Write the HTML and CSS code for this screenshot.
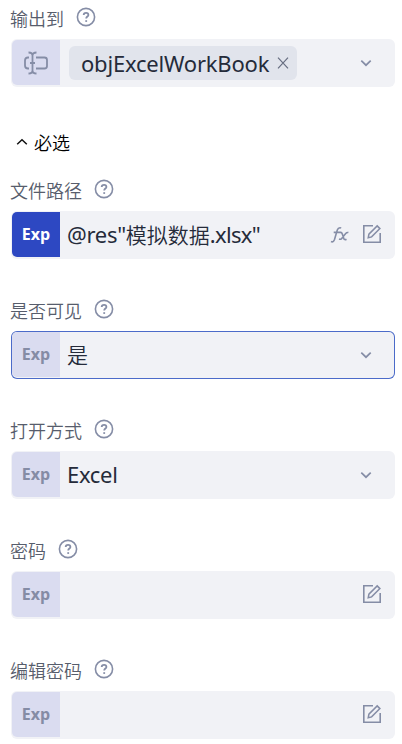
FILE: index.html
```html
<!DOCTYPE html>
<html lang="zh-CN">
<head>
<meta charset="utf-8">
<title>属性</title>
<link rel="stylesheet" href="styles.css">
</head>
<body>
<svg width="0" height="0" class="defs">
  <symbol id="help" viewBox="0 0 20 20"><circle cx="10" cy="10" r="8.6" stroke-width="1.6"/><path d="M7.7 8.1C7.7 6.7 8.7 5.9 10.1 5.9s2.3.8 2.3 2c0 1.6-2.2 1.7-2.2 3.5" stroke-width="1.8"/><path d="M10.2 13.2v1.7" stroke-width="1.8"/></symbol>
  <symbol id="down" viewBox="0 0 12 8"><path d="M1.3 1.7 6 6.2l4.7-4.5" stroke-width="1.7"/></symbol>
  <symbol id="edit" viewBox="0 0 20 20"><path d="M11 1.8H1.8v16.4h16.4V9" stroke-width="1.6"/><path d="m6.2 13.8.7-3.7 8.3-8.2 2.7 2.7-8.3 8.3z" stroke-width="1.5"/></symbol>
</svg>
<main class="panel">
  <section class="group">
    <div class="label"><span>输出到</span><svg class="help"><use href="#help"/></svg></div>
    <div class="field">
      <div class="mode"><svg class="var" viewBox="0 0 24 24"><path d="M5 6.5H4Q1 6.5 1 9.5v5q0 3 3 3h1M12 6.5h8.5q2.5 0 2.5 2.5v6q0 2.5-2.5 2.5H12M8.5 3.5v17M4.5 1.5q4 0 4 3 0-3 4-3M4.5 22.5q4 0 4-3 0 3 4 3M6 12h5" stroke-width="1.8"/></svg></div>
      <div class="tag"><span class="tag-text">objExcelWorkBook</span><svg class="close" viewBox="0 0 12 12"><path d="m1 .7 10 10.6M11 .7 1 11.3" stroke-width="1.2"/></svg></div>
      <svg class="down"><use href="#down"/></svg>
    </div>
  </section>
  <div class="section-title"><svg class="up" viewBox="0 0 12 8"><path d="M1.2 6.2 6 1.7l4.8 4.5" stroke-width="1.5"/></svg><span>必选</span></div>
  <section class="group">
    <div class="label"><span>文件路径</span><svg class="help"><use href="#help"/></svg></div>
    <div class="field">
      <div class="mode active">Exp</div>
      <div class="value path">@res"<span class="cjk">模拟数据</span><span class="ext">.xlsx"</span></div>
      <svg class="fx" viewBox="0 0 20 18"><path d="M1 15.5q2.4 1.2 3.5-2L7.3 4.1Q8.3 1 11.2 1.9M3.7 6.4h6.6M10 6.5q1.7-.5 2.3 1.4l1.5 4.5q.7 2 2.7.8M18.4 6.6q-1.5-.5-2.7 1l-4 4.8q-1.1 1.3-2.7.7" stroke-width="1.6"/></svg>
      <svg class="edit"><use href="#edit"/></svg>
    </div>
  </section>
  <section class="group">
    <div class="label"><span>是否可见</span><svg class="help"><use href="#help"/></svg></div>
    <div class="field focus">
      <div class="mode">Exp</div><div class="value"><span class="cjk">是</span></div>
      <svg class="down"><use href="#down"/></svg>
    </div>
  </section>
  <section class="group">
    <div class="label"><span>打开方式</span><svg class="help"><use href="#help"/></svg></div>
    <div class="field">
      <div class="mode">Exp</div><div class="value">Excel</div>
      <svg class="down"><use href="#down"/></svg>
    </div>
  </section>
  <section class="group">
    <div class="label"><span>密码</span><svg class="help"><use href="#help"/></svg></div>
    <div class="field"><div class="mode">Exp</div><svg class="edit"><use href="#edit"/></svg></div>
  </section>
  <section class="group">
    <div class="label"><span>编辑密码</span><svg class="help"><use href="#help"/></svg></div>
    <div class="field"><div class="mode">Exp</div><svg class="edit"><use href="#edit"/></svg></div>
  </section>
</main>
</body>
</html>
```
FILE: styles.css
```css
* { box-sizing: border-box; }
body {
  margin: 0;
  background: #fff;
  color: #252b3a;
  font-family: "Noto Sans", "Noto Sans CJK SC", sans-serif;
  overflow: hidden;
}
svg { display: block; flex: none; fill: none; stroke: #858da6; }
.defs { position: absolute; }
.panel { padding: 3px 7px 0 11px; }
.group { margin-bottom: 36px; }
.label {
  display: flex;
  align-items: center;
  gap: 11px;
  height: 28px;
  margin-bottom: 8px;
  font: 350 18px/24px "Noto Sans CJK SC", sans-serif;
  color: #575d6c;
}
.label span { margin-left: -1px; padding-top: 1px; }
.help { width: 20px; height: 20px; margin-left: 1px; }
.field {
  display: flex;
  align-items: center;
  height: 48px;
  padding: 1px;
  border-radius: 6px;
  background: #f1f2f6;
}
.field.focus { box-shadow: inset 0 0 0 1px #4b6bc9; }
.mode {
  display: flex;
  align-items: center;
  justify-content: center;
  flex: none;
  width: 48px;
  height: 45px;
  margin-top: -1px;
  padding-bottom: 2px;
  border-radius: 5px 0 0 5px;
  background: #dadcf0;
  color: #858ca5;
  font: 700 16px/22px "Open Sans", sans-serif;
}
.mode.active { background: #2d48c2; color: #fff; }
.var { width: 24px; height: 24px; margin-top: 2px; }
.value { margin: -2px 0 0 7px; font-size: 22px; line-height: 30px; letter-spacing: -.3px; white-space: nowrap; }
.cjk { font-size: 21px; font-weight: 350; letter-spacing: 0; }
.ext { letter-spacing: -.7px; }
.tag {
  display: flex;
  align-items: center;
  justify-content: space-between;
  width: 228px;
  height: 34px;
  margin: -1px 0 0 9px;
  padding: 0 8px 0 12px;
  border-radius: 6px;
  background: #e1e4ec;
}
.tag-text { font-size: 22px; line-height: 30px; letter-spacing: -.2px; white-space: nowrap; }
.close { width: 12px; height: 12px; stroke: #666d80; }
.down { width: 12px; height: 8px; margin: 0 22px 0 auto; }
.edit { width: 20px; height: 20px; margin: -2px 12px 0 auto; }
.fx { width: 20px; height: 18px; margin: 0 0 0 auto; }
.fx + .edit { margin-left: 12px; }
.section-title {
  display: flex;
  align-items: center;
  gap: 6px;
  height: 32px;
  margin: 0 0 20px 5px;
  padding-top: 6px;
  font: 350 18px/24px "Noto Sans CJK SC", sans-serif;
  color: #000;
}
.up { width: 12px; height: 8px; stroke: #111; }
```
